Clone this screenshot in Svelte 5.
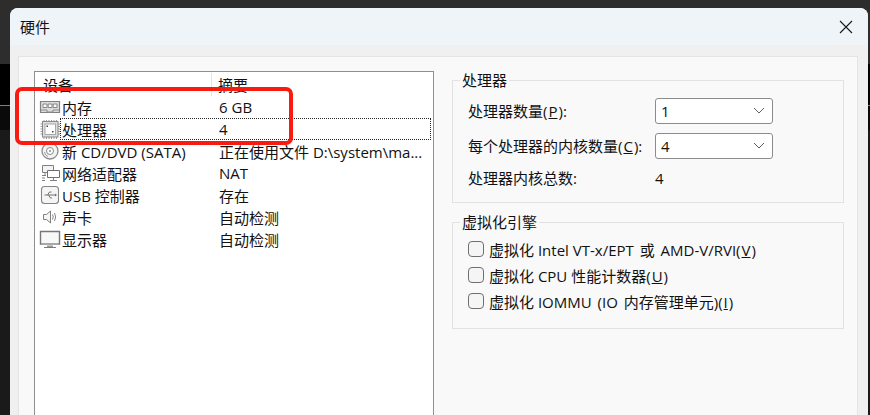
<script>
  const devices = [
    { icon: "memory", name: "内存", summary: "6 GB" },
    { icon: "cpu", name: "处理器", summary: "4", focused: true },
    { icon: "cd", name: "新 CD/DVD (SATA)", summary: "正在使用文件 D:\\system\\ma..." },
    { icon: "net", name: "网络适配器", summary: "NAT" },
    { icon: "usb", name: "USB 控制器", summary: "存在" },
    { icon: "sound", name: "声卡", summary: "自动检测" },
    { icon: "display", name: "显示器", summary: "自动检测" }
  ];
</script>

<div class="screen">
  <div class="window">
    <header class="titlebar">
      <span class="title">硬件</span>
      <svg class="close" width="14" height="14" viewBox="0 0 14 14">
        <path d="M1 1 L13 13 M13 1 L1 13" stroke="#1a1a1a" stroke-width="1.1" fill="none" />
      </svg>
    </header>
    <div class="content">
      <div class="panel">
        <div class="list">
          <div class="list-head">
            <span class="col-device">设备</span>
            <span class="col-summary">摘要</span>
          </div>
          {#each devices as d}
            <div class="row">
              <span class="icon">
                <svg width="22" height="22" viewBox="0 0 22 22" fill="none">
                  {#if d.icon === "memory"}
                    <path d="M1.500 5.500 H20.500 V16.500 H1.500 Z" fill="#dcdcdc" stroke="#808080" stroke-width="1.200" />
                    <path d="M4 8 H8 V11.500 H4 Z M9.200 8 H13 V11.500 H9.200 Z M14.200 8 H18 V11.500 H14.200 Z" fill="#fafafa" stroke="#7d7d7d" stroke-width="0.900" />
                    <path d="M2 14 H8 V16 H14 V14 H20" stroke="#8c8c8c" />
                  {:else if d.icon === "cpu"}
                    <path d="M5 4 V2 M7.500 4 V2 M10 4 V2 M12.500 4 V2 M15 4 V2 M17.500 4 V2 M5 21 V19 M7.500 21 V19 M10 21 V19 M12.500 21 V19 M15 21 V19 M17.500 21 V19 M1.500 6 H3.500 M1.500 8.500 H3.500 M1.500 11 H3.500 M1.500 13.500 H3.500 M1.500 16 H3.500 M19 6 H21 M19 8.500 H21 M19 11 H21 M19 13.500 H21 M19 16 H21" stroke="#999" />
                    <rect x="3.500" y="3.500" width="15.500" height="15.500" fill="#dedede" stroke="#8a8a8a" />
                    <rect x="6" y="6" width="10.500" height="10.500" fill="#fff" stroke="#a8a8a8" />
                    <rect x="7.500" y="7.500" width="1.500" height="1.500" fill="#444" />
                    <rect x="13" y="13" width="1.500" height="1.500" fill="#444" />
                  {:else if d.icon === "cd"}
                    <circle cx="11" cy="11" r="8" fill="#f3f3f3" stroke="#8a8a8a" stroke-width="1.300" />
                    <circle cx="11" cy="11" r="3.500" fill="#fff" stroke="#8a8a8a" />
                    <circle cx="11" cy="11" r="1" fill="#8a8a8a" />
                    <path d="M5.500 12 A5.500 5.500 0 0 0 9 16.500" stroke="#9a9a9a" />
                  {:else if d.icon === "net"}
                    <path d="M3.500 3.500 H14.500 V10.500 H3.500 Z" fill="#f4f4f4" stroke="#808080" />
                    <path d="M8.500 8.500 H20.500 V15.500 H8.500 Z" fill="#fff" stroke="#707070" />
                    <path d="M14.500 15.500 V18 M11 18.500 H18 M6 11 V13 M3 13.500 H7 M3 16 H6 M3 18.500 H6" stroke="#808080" />
                  {:else if d.icon === "usb"}
                    <rect x="2.500" y="2.500" width="17" height="17" rx="3" fill="#f5f5f5" stroke="#858585" stroke-width="1.100" />
                    <path d="M5.500 11 H16 M8.500 11 L10.500 8 H12.500 M9.500 11 L11.500 14 H13" stroke="#707070" />
                    <path d="M16 9.500 L18 11 L16 12.500 Z" fill="#707070" />
                  {:else if d.icon === "sound"}
                    <path d="M4.500 8.500 H7.500 L11.500 5 V17 L7.500 13.500 H4.500 Z" fill="#f6f6f6" stroke="#808080" />
                    <path d="M13.500 8.500 Q15 11 13.500 13.500 M15.500 7 Q17.800 11 15.500 15" stroke="#858585" />
                  {:else}
                    <path d="M1.500 3.500 H20.500 V16 H1.500 Z" fill="#f8f8f8" stroke="#777" stroke-width="1.400" />
                    <path d="M2.500 15 H19.500 V17 H2.500 Z" fill="#a8a8a8" />
                    <path d="M8 17.500 H14 V19 H8 Z" fill="#999" />
                    <path d="M5 19.500 H17" stroke="#7c7c7c" />
                  {/if}
                </svg>
              </span>
              <div class="cells" class:focused={d.focused}>
                <span class="cell-name">{d.name}</span>
                <span class="cell-summary">{d.summary}</span>
              </div>
            </div>
          {/each}
        </div>

        <div class="side">
          <fieldset class="group cpu-group">
            <legend>处理器</legend>
            <div class="field">
              <span class="label">处理器数量(<u>P</u>):</span>
              <div class="select">
                <span>1</span>
                <svg width="12" height="7" viewBox="0 0 12 7"><path d="M1 1 L6 6 L11 1" stroke="#5f5f5f" fill="none" /></svg>
              </div>
            </div>
            <div class="field">
              <span class="label">每个处理器的内核数量(<u>C</u>):</span>
              <div class="select">
                <span>4</span>
                <svg width="12" height="7" viewBox="0 0 12 7"><path d="M1 1 L6 6 L11 1" stroke="#5f5f5f" fill="none" /></svg>
              </div>
            </div>
            <div class="field total">
              <span class="label">处理器内核总数:</span>
              <span class="value">4</span>
            </div>
          </fieldset>

          <fieldset class="group virt-group">
            <legend>虚拟化引擎</legend>
            <div class="check"><span class="box"></span><span>虚拟化 Intel <span class="wide">VT-x/EPT 或 AMD-V/RVI(<u>V</u>)</span></span></div>
            <div class="check"><span class="box"></span><span>虚拟化 CPU 性能计数器(<u>U</u>)</span></div>
            <div class="check"><span class="box"></span><span>虚拟化 <span class="wide">IOMMU (IO 内存管理单元)(<u>I</u>)</span></span></div>
          </fieldset>
        </div>
      </div>
    </div>
  </div>
  <div class="annotation"></div>
</div>

<style>
  :global(body) {
    margin: 0;
    background: #1a1a1a;
    overflow: hidden;
  }

  .screen {
    position: relative;
    width: 870px;
    height: 415px;
    overflow: hidden;
    padding: 8px 0 0 10px;
    box-sizing: border-box;
    font-family: "Open Sans", "Noto Sans CJK SC", sans-serif;
    font-size: 15px;
    color: #111;
    background: linear-gradient(
      to bottom,
      #2d2d2d 0,
      #2d2d2d 64px,
      #000 64px,
      #000 105px,
      #5d8aa8 105px,
      #5d8aa8 106px,
      #0a0a0a 106px,
      #0a0a0a 130px,
      #1a1a1a 130px
    );
  }

  .window {
    width: 858px;
    height: 407px;
    display: flex;
    flex-direction: column;
    border-radius: 8px 8px 0 0;
    background: #f0f0f0;
    overflow: hidden;
  }

  .titlebar {
    flex: 0 0 37px;
    display: flex;
    align-items: center;
    justify-content: space-between;
    padding: 0 15px 0 10px;
    background: #eff4f9;
  }

  .title {
    font-size: 15px;
  }

  .content {
    flex: 1;
    display: flex;
    padding: 11px 10px 0 8px;
    min-height: 0;
  }

  .panel {
    flex: 1;
    display: flex;
    gap: 18px;
    padding: 14px 13px 0 15px;
    background: #f9f9f9;
    border: 1px solid #e4e4e4;
    border-bottom: 0;
    min-height: 0;
  }

  .list {
    width: 398px;
    background: #fff;
    border: 1px solid #8f8f8f;
    border-bottom: 0;
    flex: none;
  }

  .list-head {
    display: flex;
    height: 24px;
    align-items: center;
    padding-top: 1px;
    box-sizing: border-box;
  }

  .col-device {
    width: 177px;
    padding-left: 8px;
    box-sizing: border-box;
    border-right: 1px solid #e5e5e5;
    height: 100%;
    line-height: 24px;
  }

  .col-summary {
    padding-left: 6px;
  }

  .row {
    display: flex;
    height: 22px;
    align-items: center;
  }

  .icon {
    flex: none;
    width: 25px;
    height: 22px;
    padding-left: 4px;
    box-sizing: border-box;
  }

  .icon svg {
    display: block;
  }

  .cells {
    width: 371px;
    height: 22px;
    display: flex;
    align-items: center;
    box-sizing: border-box;
    border: 1px solid transparent;
    padding-left: 1px;
    white-space: nowrap;
  }

  .cells.focused {
    border: 1px dotted #222;
  }

  .cell-name {
    width: 157px;
    flex: none;
  }

  .side {
    flex: 1;
    display: flex;
    flex-direction: column;
    gap: 10px;
  }

  .group {
    margin: 0;
    padding: 0 0 0 15px;
    border: 1.5px solid #e2e2e2;
    min-width: 0;
  }

  legend {
    padding: 0 2px;
    margin-left: -8px;
    line-height: 18px;
  }

  .cpu-group {
    height: 132px;
    box-sizing: border-box;
  }

  .virt-group {
    height: 116px;
    box-sizing: border-box;
  }

  .field {
    display: flex;
    align-items: center;
    height: 25px;
    margin-top: 10px;
  }

  .cpu-group .field:first-of-type {
    margin-top: 9px;
  }

  .label {
    width: 187px;
    flex: none;
    white-space: nowrap;
  }

  .label u,
  .check u {
    margin: 0 1px;
  }

  .select {
    width: 118px;
    height: 26px;
    box-sizing: border-box;
    display: flex;
    align-items: center;
    justify-content: space-between;
    padding: 0 7px 0 5px;
    background: #fff;
    border: 1px solid #8c8c8c;
    border-radius: 3px;
  }

  .total {
    margin-top: 7px;
  }

  .check {
    display: flex;
    align-items: center;
    gap: 5px;
    height: 26px;
    white-space: nowrap;
  }

  .virt-group .check:first-of-type {
    margin-top: 5px;
  }

  .wide {
    word-spacing: 2px;
  }

  .box {
    width: 16px;
    height: 16px;
    box-sizing: border-box;
    border: 1px solid #6f6f6f;
    border-radius: 4px;
    background: #f5f5f5;
  }

  .annotation {
    position: absolute;
    left: 15px;
    top: 87px;
    width: 278px;
    height: 58px;
    box-sizing: border-box;
    border: 4px solid #f91b10;
    border-radius: 7px;
    pointer-events: none;
  }
</style>
